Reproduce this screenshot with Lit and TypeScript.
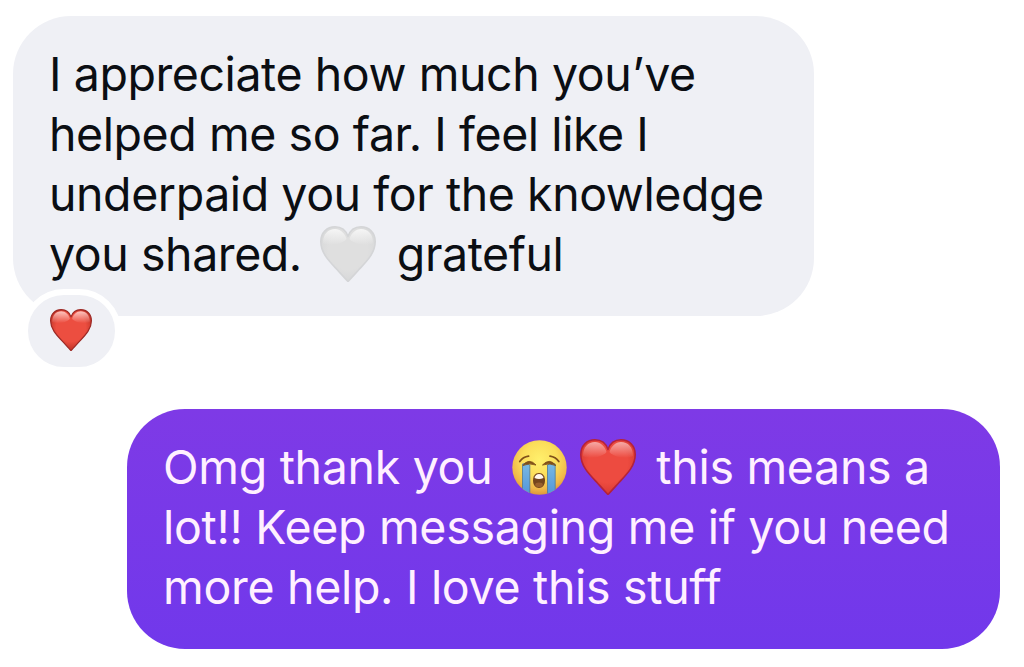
import { LitElement, css, html, svg } from "lit";
import type { TemplateResult } from "lit";
import { customElement, property } from "lit/decorators.js";
import { classMap } from "lit/directives/class-map.js";

type Tone = "white" | "red" | "small";

const HEART =
  "M28 55.5C26.5 54 22 49 17 43.5C9 35 0.8 27 0.8 15.5C0.8 6.5 7 0.8 15 0.8C21 0.8 26 4.5 28 10.5C30 4.5 35 0.8 41 0.8C49 0.8 55.2 6.5 55.2 15.5C55.2 27 47 35 39 43.5C34 49 29.5 54 28 55.5Z";

const tones = {
  white: { mid: "#dfdfdf", low: "#d6d7d8", edge: "#d4d5d7", shine: "#f6f6f6" },
  red: { mid: "#ed4b40", low: "#d73930", edge: "#b42339", shine: "#f7aaa6" },
  small: { mid: "#ec4e40", low: "#b92e22", edge: "#9c2a26", shine: "#ffc6c0" },
};

@customElement("emoji-heart")
export class EmojiHeart extends LitElement {
  @property() tone: Tone = "red";

  static styles = css`
    :host {
      display: block;
    }

    svg {
      display: block;
      width: 100%;
      height: 100%;
    }
  `;

  render() {
    const t = tones[this.tone];
    return html`
      <svg viewBox="0 0 56 56" aria-hidden="true">
        <defs>
          <radialGradient id="body" cx="50%" cy="42%" r="60%">
            <stop offset="0" stop-color=${t.mid} />
            <stop offset="0.6" stop-color=${t.mid} />
            <stop offset="1" stop-color=${t.low} />
          </radialGradient>
          <linearGradient id="shine" x1="0" y1="0" x2="0" y2="1">
            <stop offset="0" stop-color=${t.shine} />
            <stop offset="1" stop-color=${t.shine} stop-opacity="0" />
          </linearGradient>
        </defs>
        <path d=${HEART} fill="url(#body)" stroke=${t.edge} stroke-width="1.6" stroke-linejoin="round" />
        ${[0, 1].map(
          (side) => svg`
            <path
              transform=${side ? "translate(56 0) scale(-1 1)" : ""}
              d="M3 17C3 8 8 3 15 3C20.5 3 25 7.5 26.5 13C23 18 8 21 3 17Z"
              fill="url(#shine)"
            />`,
        )}
      </svg>
    `;
  }
}

@customElement("emoji-sob")
export class EmojiSob extends LitElement {
  static styles = css`
    :host {
      display: block;
    }

    svg {
      display: block;
      width: 100%;
      height: 100%;
    }
  `;

  render() {
    return html`
      <svg viewBox="0 0 55 55" aria-hidden="true">
        <defs>
          <radialGradient id="face" cx="50%" cy="36%" r="65%">
            <stop offset="0" stop-color="#fff06c" />
            <stop offset="0.5" stop-color="#fbdd5a" />
            <stop offset="0.82" stop-color="#f0b849" />
            <stop offset="1" stop-color="#dc933a" />
          </radialGradient>
          <linearGradient id="tear" x1="0" y1="0" x2="0" y2="1">
            <stop offset="0" stop-color="#79b9e2" />
            <stop offset="1" stop-color="#5195da" />
          </linearGradient>
          <clipPath id="disc"><circle cx="27.5" cy="27.5" r="27.2" /></clipPath>
        </defs>
        <circle cx="27.5" cy="27.5" r="27.2" fill="url(#face)" />
        <g clip-path="url(#disc)">
          <path d="M10.5 24Q14 22 17.8 25V55H10.5Z" fill="url(#tear)" stroke="#4d7999" stroke-width="0.8" />
          <path d="M43.2 24Q39 22 35.5 25V55H43.2Z" fill="url(#tear)" stroke="#4d7999" stroke-width="0.8" />
        </g>
        <path
          d="M7.8 21.5Q11 17 16.6 16.2M46.8 21.5Q43.5 17 38 16.2"
          fill="none"
          stroke="#805019"
          stroke-width="1.8"
          stroke-linecap="round"
        />
        <path d="M10.8 25.5Q17 17.5 24 25Q17 22.5 10.8 25.5ZM43.8 25.5Q37.5 17.5 30.5 25Q37.5 22.5 43.8 25.5Z" fill="#805019" stroke="#805019" stroke-width="0.9" />
        <path
          d="M27 33C31 33 33 36.5 33 40.5C33 45 30.5 48 27 48S21 45 21 40.5C21 36.5 23 33 27 33Z"
          fill="#74451d"
        />
        <path d="M22.5 38Q23.5 34 27 34T31.5 38Q27 40 22.5 38Z" fill="#fff8ee" />
        <ellipse cx="27" cy="44.8" rx="3.8" ry="2.3" fill="#99602d" />
      </svg>
    `;
  }
}

@customElement("chat-bubble")
export class ChatBubble extends LitElement {
  @property({ type: Boolean }) outgoing = false;
  @property({ attribute: false }) lines: TemplateResult[] = [];

  static styles = css`
    :host {
      display: block;
    }

    .bubble {
      box-sizing: border-box;
      position: relative;
      width: 801px;
      padding: 28px 36px 32px;
      border-radius: 58px;
      background: #eff0f5;
      color: #0b0e13;
      font: 400 46.5px/60px Inter, "Liberation Sans", sans-serif;
      letter-spacing: -0.43px;
    }

    .bubble.outgoing {
      width: 873px;
      background: linear-gradient(#7e3ae6, #7138eb);
      color: #fff0ff;
      letter-spacing: -0.31px;
    }

    .line {
      display: flex;
      align-items: center;
      height: 60px;
      white-space: nowrap;
    }

    .heart {
      width: 56px;
      height: 56px;
      margin: 0 21px 0 18px;
    }

    .sob {
      width: 55px;
      height: 55px;
      margin: 0 13px 0 20px;
    }

    .after-sob {
      margin: 0 20px 0 0;
    }

    .reaction {
      position: absolute;
      left: 9px;
      top: 273px;
      width: 87px;
      height: 72px;
      display: flex;
      align-items: center;
      justify-content: center;
      border: 6px solid #fff;
      border-radius: 42px;
      background: #eff0f5;
    }

    .reaction emoji-heart {
      width: 42px;
      height: 42px;
      margin: 0 1px 2px 0;
    }
  `;

  render() {
    return html`
      <div class=${classMap({ bubble: true, outgoing: this.outgoing })}>
        ${this.lines.map((line) => html`<div class="line">${line}</div>`)}
        ${this.outgoing
          ? ""
          : html`<div class="reaction"><emoji-heart tone="small"></emoji-heart></div>`}
      </div>
    `;
  }
}

@customElement("app-root")
export class AppRoot extends LitElement {
  static styles = css`
    :host {
      box-sizing: border-box;
      display: flex;
      flex-direction: column;
      gap: 93px;
      height: 667px;
      padding: 16px 24px 18px 13px;
      background: #fff;
      overflow: hidden;
    }

    .sent {
      align-self: flex-end;
    }
  `;

  private received = [
    html`<span>I appreciate how much you’ve</span>`,
    html`<span>helped me so far. I feel like I</span>`,
    html`<span>underpaid you for the knowledge</span>`,
    html`<span>you shared.</span><emoji-heart class="heart" tone="white"></emoji-heart><span>grateful</span>`,
  ];

  private sent = [
    html`<span>Omg thank you</span><emoji-sob class="sob"></emoji-sob><emoji-heart class="heart after-sob"></emoji-heart><span>this means a</span>`,
    html`<span>lot!! Keep messaging me if you need</span>`,
    html`<span>more help. I love this stuff</span>`,
  ];

  render() {
    return html`
      <chat-bubble .lines=${this.received}></chat-bubble>
      <chat-bubble class="sent" outgoing .lines=${this.sent}></chat-bubble>
    `;
  }
}
